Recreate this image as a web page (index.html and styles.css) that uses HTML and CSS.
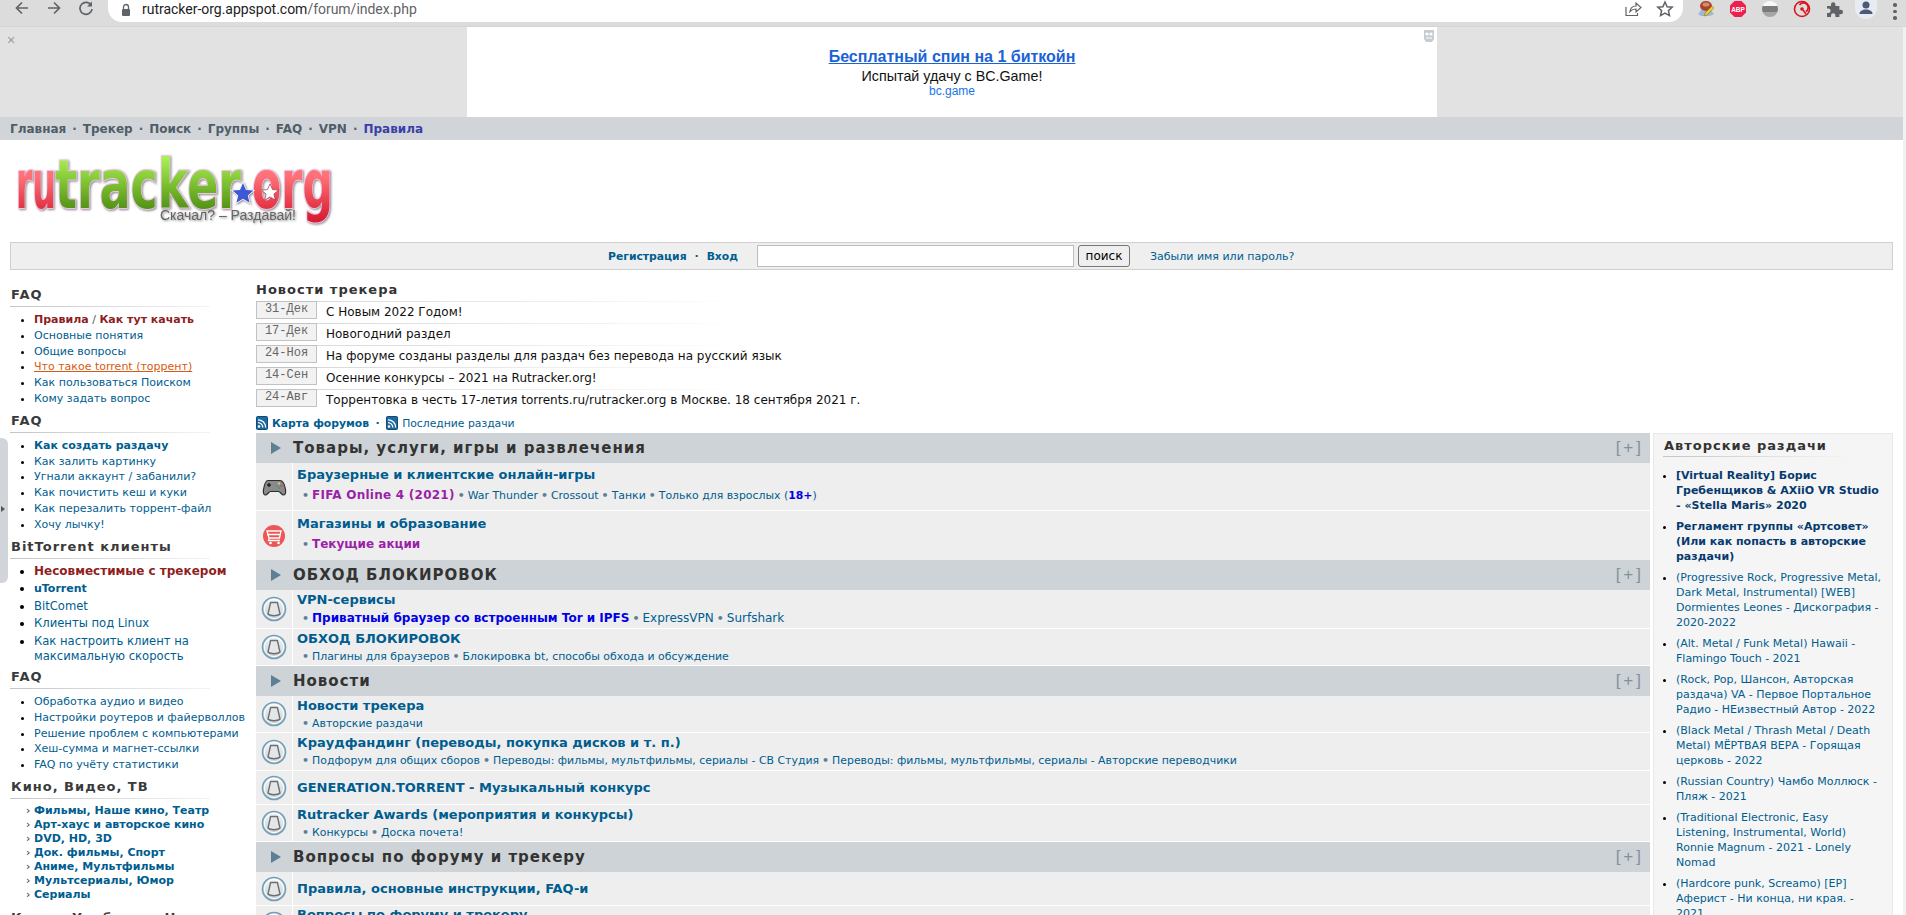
FILE: index.html
```html
<!DOCTYPE html>
<html lang="ru">
<head>
<meta charset="utf-8">
<title>rutracker.org</title>
<link rel="stylesheet" href="styles.css">
</head>
<body>
<svg class="defs" width="0" height="0" aria-hidden="true">
  <defs>
    <linearGradient id="ringfill" x1="0" y1="0" x2="0" y2="1"><stop offset="0" stop-color="#f4f6f7"/><stop offset="1" stop-color="#c9cdd0"/></linearGradient>
    <symbol id="bell" viewBox="0 0 26 26">
      <circle cx="13" cy="13" r="11.5" fill="url(#ringfill)" stroke="#6f9fbb" stroke-width="1.6"/>
      <circle cx="13" cy="13" r="9.6" fill="none" stroke="#fff" stroke-width="1"/>
      <path d="M9.6 6.5h6.8l2.6 11.6c-2.5 2.2-9.500 2.200-12 0z" fill="#e4e6e8" stroke="#6b6f72" stroke-width="1.400" stroke-linejoin="round"/>
    </symbol>
    <symbol id="rss" viewBox="0 0 12 14">
      <rect x="0.500" y="0.500" width="11" height="13" rx="1" fill="#1d6a9e" stroke="#0c4c78"/>
      <circle cx="3" cy="10.500" r="1.300" fill="#fff"/>
      <path d="M2 6.700a4.800 4.800 0 0 1 4.800 4.800M2 3.800a7.700 7.700 0 0 1 7.700 7.700" fill="none" stroke="#fff" stroke-width="1.300"/>
    </symbol>
    <linearGradient id="red" gradientUnits="userSpaceOnUse" x1="0" y1="20" x2="0" y2="62"><stop offset="0" stop-color="#ff7378"/><stop offset="1" stop-color="#d91f33"/></linearGradient>
    <linearGradient id="green" gradientUnits="userSpaceOnUse" x1="0" y1="2" x2="0" y2="56"><stop offset="0" stop-color="#a9f052"/><stop offset="1" stop-color="#4c8d10"/></linearGradient>
  </defs>
</svg>

<div class="page">
  <header class="chrome">
    <div class="nav-icons">
      <svg class="ic" viewBox="0 0 16 16"><path d="M14 8H3M8 2.500 2.500 8 8 13.500" fill="none" stroke="#5f6368" stroke-width="1.700"/></svg>
      <svg class="ic" viewBox="0 0 16 16"><path d="M2 8h11M8 2.500 13.500 8 8 13.500" fill="none" stroke="#5f6368" stroke-width="1.700"/></svg>
      <svg class="ic" viewBox="0 0 16 16"><path d="M13.300 5.500A6 6 0 1 0 14 9" fill="none" stroke="#5f6368" stroke-width="1.700"/><path d="M14 1.500v5h-5z" fill="#5f6368"/></svg>
    </div>
    <div class="omnibox">
      <svg class="lock" viewBox="0 0 10 14"><path d="M2.500 6V4a2.500 2.500 0 0 1 5 0v2" fill="none" stroke="#5f6368" stroke-width="1.300"/><rect x="1" y="6" width="8" height="7" rx="1" fill="#5f6368"/></svg>
      <span class="url"><span class="host">rutracker-org.appspot.com</span>/forum/index.php</span>
      <span class="omni-end">
        <svg class="ic" viewBox="0 0 18 18"><path d="M2 7v8.500h11.500V13M6 11.500c.5-3.500 3-5.500 6-5.500V3l5 4.500-5 4.500V9c-2.500 0-4.500.8-6 2.500z" fill="none" stroke="#5f6368" stroke-width="1.200"/></svg>
        <svg class="ic" viewBox="0 0 18 18"><path d="M9 2l2.100 4.700 5.100.5-3.800 3.400 1.100 5L9 13l-4.500 2.600 1.100-5L1.800 7.200l5.100-.5z" fill="none" stroke="#5f6368" stroke-width="1.500"/></svg>
      </span>
    </div>
    <div class="exts">
      <svg class="ext" viewBox="0 0 18 18"><path d="M1 14l4-5h8l4 5-4 2H4z" fill="#9db7d6"/><ellipse cx="9" cy="6" rx="6" ry="5" fill="#a8442c"/><ellipse cx="9" cy="4.500" rx="3.500" ry="2" fill="#d98a6e"/><path d="M7 16l1-3 7-7 2 2-7 7z" fill="#f0c92c" stroke="#7a6a1a" stroke-width=".5"/></svg>
      <svg class="ext" viewBox="0 0 18 18"><path d="M5.500 1h7L17 5.500v7L12.500 17h-7L1 12.500v-7z" fill="#ee1f4d"/><text x="9" y="11.600" class="abp">ABP</text></svg>
      <svg class="ext" viewBox="0 0 18 18"><defs><clipPath id="cc"><circle cx="9" cy="9" r="8"/></clipPath></defs><g clip-path="url(#cc)"><rect width="18" height="6" fill="#f7f7f7"/><rect y="6" width="18" height="6" fill="#7b7b7b"/><rect y="12" width="18" height="6" fill="#a5a5a5"/></g></svg>
      <svg class="ext" viewBox="0 0 18 18"><circle cx="9" cy="9" r="7.500" fill="none" stroke="#d8141c" stroke-width="1.600"/><path d="M13 11.500A4.700 4.700 0 1 0 6.500 5" fill="none" stroke="#d8141c" stroke-width="1.600"/><circle cx="9" cy="9" r="1.800" fill="#d8141c"/><path d="M10 10l3 4" stroke="#d8141c" stroke-width="1.600"/></svg>
      <svg class="ext" viewBox="0 0 18 18"><path d="M2 6h4V4.500a2.200 2.200 0 0 1 4.400 0V6h4v3.800h1.400a2.200 2.200 0 0 1 0 4.400h-1.400V17H10.400v-1.500a2.200 2.200 0 0 0-4.400 0V17H2v-4h1.300a2.300 2.300 0 0 0 0-4.600H2z" fill="#5f6368"/></svg>
      <span class="avatar"><svg class="ext" viewBox="0 0 18 18"><circle cx="9" cy="6" r="3.500" fill="#4a5a78"/><path d="M2.500 15c0-3 3-4.500 6.500-4.500s6.500 1.500 6.500 4.500z" fill="#4a5a78"/></svg></span>
      <span class="dots"><i></i><i></i><i></i></span>
    </div>
  </header>

  <div class="viewport">
    <div class="content">
      <div class="ad-band">
        <span class="ad-close">×</span>
        <div class="ad">
          <a class="ad-title">Бесплатный спин на 1 биткойн</a>
          <p class="ad-text">Испытай удачу с BC.Game!</p>
          <a class="ad-site">bc.game</a>
          <svg class="ad-mark" viewBox="0 0 14 14"><path d="M2 1h10v9l-2 3H4l-2-3z" fill="#c6ccd2"/><circle cx="5" cy="5" r="1.600" fill="#fff"/><circle cx="9" cy="5" r="1.600" fill="#fff"/><path d="M4 9h6" stroke="#fff"/></svg>
        </div>
      </div>

      <nav class="topnav">
        <a>Главная</a><span>·</span><a>Трекер</a><span>·</span><a>Поиск</a><span>·</span><a>Группы</a><span>·</span><a>FAQ</a><span>·</span><a>VPN</a><span>·</span><a class="rules">Правила</a>
      </nav>

      <div class="logo-row">
        <svg class="logo" viewBox="0 0 320 68" width="320" height="68">
          <text class="lg lg-red" x="2" y="52" textLength="40" lengthAdjust="spacingAndGlyphs">ru</text>
          <text class="lg lg-green" x="41" y="52" textLength="186" lengthAdjust="spacingAndGlyphs">tracker</text>
          <text class="lg lg-red" x="238" y="52" textLength="81" lengthAdjust="spacingAndGlyphs">org</text>
          <path class="star-blue" d="M229 27l3 7 7.500.6-5.700 4.800 1.800 7.300-6.600-3.900-6.600 3.900 1.800-7.300-5.700-4.800 7.500-.6z"/>
          <path class="star-white" d="M256 28l2.500 5.600 6 .5-4.600 4 1.400 5.900-5.300-3.100-5.300 3.100 1.400-5.900-4.600-4 6-.5z"/>
          <text class="lg-sub" x="146" y="64">Скачал? – Раздавай!</text>
        </svg>
      </div>

      <form class="login">
        <a class="strong">Регистрация</a><span class="dot">·</span><a class="strong">Вход</a>
        <input class="login-input" type="text" aria-label="Поиск">
        <button class="login-btn" type="button">поиск</button>
        <a class="forgot">Забыли имя или пароль?</a>
      </form>

      <div class="columns">
        <aside class="side">
          <h3 class="side-h">FAQ</h3>
          <ul class="side-list">
            <li><a class="red">Правила</a> <span class="slash">/</span> <a class="red">Как тут качать</a></li>
            <li><a>Основные понятия</a></li>
            <li><a>Общие вопросы</a></li>
            <li><a class="orange">Что такое torrent (торрент)</a></li>
            <li><a>Как пользоваться Поиском</a></li>
            <li><a>Кому задать вопрос</a></li>
          </ul>
          <h3 class="side-h">FAQ</h3>
          <ul class="side-list">
            <li><a class="strong">Как создать раздачу</a></li>
            <li><a>Как залить картинку</a></li>
            <li><a>Угнали аккаунт / забанили?</a></li>
            <li><a>Как почистить кеш и куки</a></li>
            <li><a>Как перезалить торрент-файл</a></li>
            <li><a>Хочу лычку!</a></li>
          </ul>
          <h3 class="side-h">BitTorrent клиенты</h3>
          <ul class="side-list big">
            <li><a class="red">Несовместимые с трекером</a></li>
            <li><a class="strong small-strong">uTorrent</a></li>
            <li><a>BitComet</a></li>
            <li><a>Клиенты под Linux</a></li>
            <li><a>Как настроить клиент на максимальную скорость</a></li>
          </ul>
          <h3 class="side-h">FAQ</h3>
          <ul class="side-list">
            <li><a>Обработка аудио и видео</a></li>
            <li><a>Настройки роутеров и файерволлов</a></li>
            <li><a>Решение проблем с компьютерами</a></li>
            <li><a>Хеш-сумма и магнет-ссылки</a></li>
            <li><a>FAQ по учёту статистики</a></li>
          </ul>
          <h3 class="side-h">Кино, Видео, ТВ</h3>
          <ul class="side-list chev">
            <li><a>Фильмы, Наше кино, Театр</a></li>
            <li><a>Арт-хаус и авторское кино</a></li>
            <li><a>DVD, HD, 3D</a></li>
            <li><a>Док. фильмы, Спорт</a></li>
            <li><a>Аниме, Мультфильмы</a></li>
            <li><a>Мультсериалы, Юмор</a></li>
            <li><a>Сериалы</a></li>
          </ul>
          <h3 class="side-h">Книги, Учебники, Ноты</h3>
        </aside>

        <main class="main">
          <h3 class="news-h">Новости трекера</h3>
          <ul class="news">
            <li><span class="date">31-Дек</span><a>С Новым 2022 Годом!</a></li>
            <li><span class="date">17-Дек</span><a>Новогодний раздел</a></li>
            <li><span class="date">24-Ноя</span><a>На форуме созданы разделы для раздач без перевода на русский язык</a></li>
            <li><span class="date">14-Сен</span><a>Осенние конкурсы – 2021 на Rutracker.org!</a></li>
            <li><span class="date">24-Авг</span><a>Торрентовка в честь 17-летия torrents.ru/rutracker.org в Москве. 18 сентября 2021 г.</a></li>
          </ul>
          <div class="feeds">
            <svg class="rss"><use href="#rss"/></svg><a class="strong">Карта форумов</a><span class="dot">·</span><svg class="rss"><use href="#rss"/></svg><a>Последние раздачи</a>
          </div>

          <div class="board">
            <section class="forums">
              <div class="cat"><span class="tri"></span><h2 class="cat-title">Товары, услуги, игры и развлечения</h2><span class="plus">[+]</span></div>
              <div class="row h47">
                <div class="ico">
                  <svg class="ico-svg" viewBox="0 0 26 26"><path d="M7 6.500h12c3 0 4.500 3 5.500 9 .6 4-.6 5.500-2 5.500-2 0-3-3.500-5-3.500H9.500c-2 0-3 3.500-5 3.500-1.400 0-2.600-1.500-2-5.500 1-6 2.500-9 4.500-9z" fill="#8a8a8a" stroke="#2e2e2e" stroke-width="1.200"/><path d="M6 11h4M8 9v4" stroke="#222" stroke-width="1.500"/><circle cx="18" cy="9.500" r="1.100" fill="#e6d84a"/><circle cx="20.500" cy="12" r="1.100" fill="#d44"/><circle cx="15.500" cy="12" r="1.100" fill="#4a4"/><circle cx="18" cy="14" r="1.100" fill="#48c"/></svg>
                </div>
                <div class="cell">
                  <a class="title">Браузерные и клиентские онлайн-игры</a>
                  <p class="subs"><b class="b">•</b><a class="purple fifa">FIFA Online 4 (2021)</a><b class="b">•</b><a>War Thunder</a><b class="b">•</b><a>Crossout</a><b class="b">•</b><a>Танки</a><b class="b">•</b><a>Только для взрослых (<strong class="blue">18+</strong>)</a></p>
                </div>
              </div>
              <div class="row h49">
                <div class="ico">
                  <svg class="ico-svg" viewBox="0 0 26 26"><circle cx="13" cy="13" r="11" fill="#ee5555"/><path d="M6 8h14l-1.500 7H8zM6 11.500h13.500M8 15l-.5 2.500H19" fill="none" stroke="#fff" stroke-width="1.300"/><circle cx="9.500" cy="20" r="1.300" fill="#fff"/><circle cx="17.500" cy="20" r="1.300" fill="#fff"/></svg>
                </div>
                <div class="cell">
                  <a class="title">Магазины и образование</a>
                  <p class="subs"><b class="b">•</b><a class="purple">Текущие акции</a></p>
                </div>
              </div>

              <div class="cat"><span class="tri"></span><h2 class="cat-title">ОБХОД БЛОКИРОВОК</h2><span class="plus">[+]</span></div>
              <div class="row h38">
                <div class="ico"><svg class="ico-svg"><use href="#bell"/></svg></div>
                <div class="cell">
                  <a class="title">VPN-сервисы</a>
                  <p class="subs"><b class="b">•</b><a class="pure-blue">Приватный браузер со встроенным Tor и IPFS</a><b class="b">•</b><a class="sub-big">ExpressVPN</a><b class="b">•</b><a class="sub-big">Surfshark</a></p>
                </div>
              </div>
              <div class="row h36">
                <div class="ico"><svg class="ico-svg"><use href="#bell"/></svg></div>
                <div class="cell">
                  <a class="title">ОБХОД БЛОКИРОВОК</a>
                  <p class="subs"><b class="b">•</b><a>Плагины для браузеров</a><b class="b">•</b><a>Блокировка bt, способы обхода и обсуждение</a></p>
                </div>
              </div>

              <div class="cat"><span class="tri"></span><h2 class="cat-title">Новости</h2><span class="plus">[+]</span></div>
              <div class="row h36">
                <div class="ico"><svg class="ico-svg"><use href="#bell"/></svg></div>
                <div class="cell">
                  <a class="title">Новости трекера</a>
                  <p class="subs"><b class="b">•</b><a>Авторские раздачи</a></p>
                </div>
              </div>
              <div class="row h37">
                <div class="ico"><svg class="ico-svg"><use href="#bell"/></svg></div>
                <div class="cell">
                  <a class="title">Краудфандинг (переводы, покупка дисков и т. п.)</a>
                  <p class="subs"><b class="b">•</b><a>Подфорум для общих сборов</a><b class="b">•</b><a>Переводы: фильмы, мультфильмы, сериалы - СВ Студия</a><b class="b">•</b><a>Переводы: фильмы, мультфильмы, сериалы - Авторские переводчики</a></p>
                </div>
              </div>
              <div class="row h33">
                <div class="ico"><svg class="ico-svg"><use href="#bell"/></svg></div>
                <div class="cell"><a class="title">GENERATION.TORRENT - Музыкальный конкурс</a></div>
              </div>
              <div class="row h36">
                <div class="ico"><svg class="ico-svg"><use href="#bell"/></svg></div>
                <div class="cell">
                  <a class="title">Rutracker Awards (мероприятия и конкурсы)</a>
                  <p class="subs"><b class="b">•</b><a>Конкурсы</a><b class="b">•</b><a>Доска почета!</a></p>
                </div>
              </div>

              <div class="cat"><span class="tri"></span><h2 class="cat-title">Вопросы по форуму и трекеру</h2><span class="plus">[+]</span></div>
              <div class="row h33">
                <div class="ico"><svg class="ico-svg"><use href="#bell"/></svg></div>
                <div class="cell"><a class="title">Правила, основные инструкции, FAQ-и</a></div>
              </div>
              <div class="row h36 row-top">
                <div class="ico"><svg class="ico-svg"><use href="#bell"/></svg></div>
                <div class="cell"><a class="title">Вопросы по форуму и трекеру</a></div>
              </div>
            </section>

            <aside class="panel">
              <h3 class="panel-h">Авторские раздачи</h3>
              <ul class="panel-list">
                <li><a class="navy">[Virtual Reality] Борис Гребенщиков &amp; AXiiO VR Studio - «Stella Maris» 2020</a></li>
                <li><a class="navy">Регламент группы «Артсовет» (Или как попасть в авторские раздачи)</a></li>
                <li><a>(Progressive Rock, Progressive Metal, Dark Metal, Instrumental) [WEB] Dormientes Leones - Дискография - 2020-2022</a></li>
                <li><a>(Alt. Metal / Funk Metal) Hawaii - Flamingo Touch - 2021</a></li>
                <li><a>(Rock, Pop, Шансон, Авторская раздача) VA - Первое Портальное Радио - НЕизвестный Автор - 2022</a></li>
                <li><a>(Black Metal / Thrash Metal / Death Metal) МЁРТВАЯ ВЕРА - Горящая церковь - 2022</a></li>
                <li><a>(Russian Country) Чамбо Моллюск - Пляж - 2021</a></li>
                <li><a>(Traditional Electronic, Easy Listening, Instrumental, World) Ronnie Magnum - 2021 - Lonely Nomad</a></li>
                <li><a>(Hardcore punk, Screamo) [EP] Аферист - Ни конца, ни края. - 2021</a></li>
              </ul>
            </aside>
          </div>
        </main>
      </div>
      <button class="side-handle" type="button" aria-label="Скрыть панель"></button>
    </div>
    <div class="scrollbar"></div>
  </div>
</div>
</body>
</html>
```

FILE: styles.css
```css
* { box-sizing: border-box; }
html, body { margin: 0; padding: 0; background: #fff; }
body { font-family: "DejaVu Sans", Verdana, sans-serif; font-size: 11px; color: #000; }
.defs { position: absolute; }
p, h2, h3, ul { margin: 0; padding: 0; }
a { color: #005d8f; text-decoration: none; }
.page { width: 1906px; height: 915px; overflow: hidden; display: flex; flex-direction: column; }

/* browser bar */
.chrome { height: 27px; flex: none; display: flex; background: #dcdcdc; border-bottom: 1px solid #d4d4d4; }
.nav-icons { width: 108px; display: flex; gap: 16px; padding: 0 0 0 14px; }
.ic { width: 16px; height: 16px; flex: none; }
.omnibox { width: 1575px; height: 22px; background: #fff; border-radius: 0 0 14px 14px; display: flex; align-items: center; padding: 0 9px 0 13px; font: 14px/18px Roboto, "Liberation Sans", sans-serif; color: #5f6368; }
.lock { width: 10px; height: 14px; margin: -3px 11px 0 0; }
.url { margin-top: -5px; letter-spacing: -.02px; }
.host { color: #202124; }
.omni-end { margin-left: auto; display: flex; gap: 14px; margin-top: -5px; }
.omni-end .ic { width: 18px; height: 18px; }
.exts { flex: 1; display: flex; align-items: flex-start; padding-left: 14px; gap: 14px; }
.ext { width: 18px; height: 18px; flex: none; display: block; }
.abp { font: bold 6.500px "Liberation Sans", sans-serif; fill: #fff; text-anchor: middle; }
.avatar { width: 22px; height: 20px; margin: -1px -2px 0; background: #e8ecf2; border-radius: 0 0 11px 11px; display: flex; justify-content: center; }
.dots { display: flex; flex-direction: column; gap: 3px; margin: 3px 0 0 4px; }
.dots i { width: 3.500px; height: 3.500px; border-radius: 50%; background: #5f6368; }

/* viewport */
.viewport { flex: 1; display: flex; min-height: 0; }
.content { position: relative; width: 1903px; flex: none; }
.scrollbar { flex: 1; background: #f1f1f1; }

/* ad */
.ad-band { height: 90px; background: #e2e2e2; display: flex; justify-content: center; position: relative; padding-left: 1px; }
.ad-close { position: absolute; left: 7px; top: 5px; font: 14px/16px "Liberation Sans", sans-serif; color: #9a9a9a; }
.ad { width: 970px; background: #fff; position: relative; text-align: center; font-family: "Liberation Sans", Arial, sans-serif; padding-top: 20px; }
.ad-title { display: block; font-size: 16px; line-height: 20px; font-weight: bold; color: #1a62d6; text-decoration: underline; }
.ad-text { font-size: 14.300px; line-height: 18px; color: #111; }
.ad-site { display: block; font-size: 12px; line-height: 13px; color: #1a73e8; }
.ad-mark { position: absolute; right: 1px; top: 2px; width: 14px; height: 14px; }

/* top nav */
.topnav { height: 23px; background: #d1d5d9; padding: 0 0 0 10px; display: flex; align-items: center; font-weight: bold; font-size: 12px; color: #55626b; }
.topnav a { color: #4f5d66; }
.topnav span { width: 16.600px; text-align: center; }
.topnav .rules { color: #3a3fa8; }

/* logo */
.logo-row { height: 102px; padding: 16px 0 0 14px; }
.logo { display: block; overflow: visible; filter: drop-shadow(1px 1px 1px #888); }
.lg { font: bold 68px "DejaVu Sans", sans-serif; stroke: #f1c2ec; stroke-width: 2px; paint-order: stroke; }
.lg-red { fill: url(#red); }
.lg-green { fill: url(#green); }
.star-blue { fill: #3c58d6; stroke: #fff; stroke-width: 1.500px; paint-order: stroke; }
.star-white { fill: #fff; stroke: #a02030; stroke-width: .6px; }
.lg-sub { font: 14px "Liberation Sans", sans-serif; fill: #666; }

/* login */
.login { margin: 0 10px; height: 28px; background: #efefef; border: 1px solid #cfcfcf; display: flex; align-items: center; padding-left: 597px; font-size: 11px; }
.strong { font-weight: bold; }
.login .strong { font-size: 10.800px; }
.login .dot { width: 20px; text-align: center; color: #005d8f; font-weight: bold; }
.login-input { width: 317px; height: 22px; margin: 0 4px 0 19px; border: 1px solid #bdbdbd; background: #fff; padding: 0; }
.login-btn { width: 52px; height: 22px; padding: 0; border: 1px solid #767676; border-radius: 3px; background: #efefef; font: 12px "DejaVu Sans", sans-serif; color: #000; }
.forgot { margin-left: 20px; }

/* columns */
.columns { display: flex; align-items: flex-start; padding: 0 10px; }
.side { width: 246px; flex: none; padding: 17px 0 0; }
.main { flex: 1; min-width: 0; padding-top: 12px; }

/* sidebar */
.side-h { font-size: 13px; line-height: 16px; font-weight: bold; letter-spacing: 1px; color: #3a3a3a; padding: 0 0 3px 1px; margin-bottom: 5px; width: 200px; white-space: nowrap; background: linear-gradient(to right, #c4c4c4, #f4f4f4) no-repeat left bottom / 100% 1px; height: 20px; }
.side-list { padding-left: 24px; margin-bottom: 6px; list-style: disc; line-height: 15.800px; white-space: nowrap; }
.side-list .red { color: #8f1f1f; font-weight: bold; }
.slash { color: #555; }
.side-list .orange { color: #d85a10; text-decoration: underline; }
.side-list.big { font-size: 11.600px; line-height: 15px; white-space: normal; width: 190px; margin-bottom: 5px; }
.side-list.big li { margin-bottom: 2.600px; }
.side-list.big .red { font-size: 12px; white-space: nowrap; }
.small-strong { font-size: 11px; }
.side-list.chev { list-style-type: "› "; font-size: 11px; line-height: 14.100px; font-weight: bold; margin-bottom: 7px; }
.side-list.chev li::marker { font-weight: normal; color: #333; }

/* news */
.news-h { font-size: 13px; line-height: 16px; font-weight: bold; letter-spacing: 1px; color: #333; margin-bottom: 3px; height: 16px; }
.news { list-style: none; }
.news li { height: 22px; display: flex; background: linear-gradient(to right, #d4d4d4, #fff 490px) no-repeat left top / 100% 1px; font-size: 12px; line-height: 20px; }
.news a { color: #111; padding-top: 1px; }
.date { width: 61px; height: 18px; margin-right: 9px; border: 1px solid #c2c2c2; background: #f2f2f2; font: 12px/14px "Liberation Mono", monospace; color: #666; text-align: center; }
.feeds { display: flex; align-items: center; height: 20px; margin-top: 2px; }
.rss { width: 12px; height: 14px; margin-right: 4px; flex: none; }
.feeds a { font-size: 10.800px; }
.feeds .dot { width: 17px; text-align: center; color: #005d8f; font-weight: bold; }

/* board */
.board { display: flex; align-items: flex-start; gap: 3px; }
.forums { width: 1394px; flex: none; }
.cat { height: 30px; background: #ced3d7; display: flex; align-items: center; padding: 0 6px 0 15px; }
.tri { width: 0; height: 0; border-left: 10px solid #5d7f94; border-top: 6px solid transparent; border-bottom: 6px solid transparent; margin-right: 12px; }
.cat-title { font-size: 15px; line-height: 20px; font-weight: bold; letter-spacing: 1px; color: #333; flex: 1; }
.plus { font: 17px "Liberation Sans", sans-serif; letter-spacing: 3px; color: #82929c; }
.row { display: flex; background: #eeeeee; border-bottom: 1px solid #fff; }
.h33 { height: 34px; }
.h36 { height: 37px; }
.h37 { height: 38px; }
.h38 { height: 39px; }
.h47 { height: 48px; }
.h49 { height: 49px; border-bottom: 0; }
.ico { width: 37px; flex: none; border-right: 1px solid #fff; display: flex; align-items: center; justify-content: center; padding-right: 1px; }
.ico-svg { width: 26px; height: 26px; display: block; }
.cell { flex: 1; padding-left: 4px; display: flex; flex-direction: column; justify-content: center; align-items: flex-start; }
.row-top .cell { justify-content: flex-start; }
.h47 .cell, .h49 .cell { padding-bottom: 3px; }
.h47 .subs, .h49 .subs { margin-top: 3px; }
.h38 .cell { padding-bottom: 1px; }
.h38 .subs { margin-top: 1px; }
.title { font-size: 13px; line-height: 18px; font-weight: bold; color: #005d8f; }
.subs { font-size: 10.900px; line-height: 17px; padding-left: 2px; color: #005d8f; white-space: nowrap; }
.b { color: #5d7f94; margin: 0 3px; font-weight: bold; font-size: 11px; }
.purple { color: #9b1fa8; font-size: 12px; font-weight: bold; }
.fifa { letter-spacing: .25px; }
.pure-blue { color: #0000e6; font-size: 12px; font-weight: bold; }
.sub-big { font-size: 12px; }
.blue { color: #0000e6; }

/* right panel */
.panel { flex: 1; min-width: 0; background: #f5f5f5; border: 1px solid #e8e8e8; padding: 0 10px 0 9px; height: 700px; }
.panel-h { font-size: 13px; line-height: 16px; font-weight: bold; letter-spacing: 1px; color: #333; padding: 4px 0 3px 1px; width: 200px; height: 23px; background: linear-gradient(to right, #c4c4c4, #f8f8f8) no-repeat left bottom / 100% 1px; white-space: nowrap; margin-bottom: 11px; }
.panel-list { padding-left: 13px; list-style: disc; line-height: 15px; }
.panel-list li { margin-bottom: 6px; }
.panel-list .navy { color: #073a6e; font-weight: bold; }

/* sidebar handle */
.side-handle { position: absolute; left: 0; top: 411px; width: 8px; height: 145px; padding: 0; border: 0; background: #d1d5d9; border-radius: 0 6px 6px 0; }
.side-handle::after { content: ""; position: absolute; left: 1px; top: 68px; border-left: 4px solid #555; border-top: 3px solid transparent; border-bottom: 3px solid transparent; }
```
